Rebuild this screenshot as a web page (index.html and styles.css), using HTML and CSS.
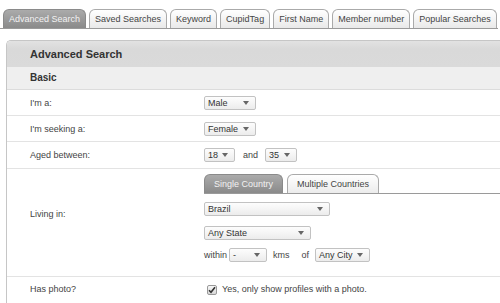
FILE: index.html
```html
<!DOCTYPE html>
<html>
<head>
<meta charset="utf-8">
<link rel="stylesheet" href="styles.css">
</head>
<body>
<div class="tabs">
  <div class="tab active">Advanced Search</div>
  <div class="tab">Saved Searches</div>
  <div class="tab">Keyword</div>
  <div class="tab">CupidTag</div>
  <div class="tab">First Name</div>
  <div class="tab">Member number</div>
  <div class="tab">Popular Searches</div>
</div>
<div class="panel">
  <div class="panel-head">Advanced Search</div>
  <div class="section">Basic</div>
  <div class="row">
    <div class="label">I'm a:</div>
    <div class="field"><span class="sel w-gender">Male</span></div>
  </div>
  <div class="row">
    <div class="label">I'm seeking a:</div>
    <div class="field"><span class="sel w-gender">Female</span></div>
  </div>
  <div class="row row-age">
    <div class="label">Aged between:</div>
    <div class="field">
      <span class="sel w-age">18</span>
      <span class="txt and">and</span>
      <span class="sel w-age2">35</span>
    </div>
  </div>
  <div class="row row-living">
    <div class="label label-top">Living in:</div>
    <div class="field field-col">
      <div class="subtabs">
        <div class="subtab active">Single Country</div>
        <div class="subtab">Multiple Countries</div>
      </div>
      <div class="line line-country"><span class="sel w-country">Brazil</span></div>
      <div class="line line-state"><span class="sel w-state">Any State</span></div>
      <div class="line line-within">
        <span class="txt">within</span>
        <span class="sel w-dist">-</span>
        <span class="txt kms">kms</span>
        <span class="txt of">of</span>
        <span class="sel w-city">Any City</span>
      </div>
    </div>
  </div>
  <div class="row row-photo">
    <div class="label">Has photo?</div>
    <div class="field">
      <span class="check"><svg width="8" height="8" viewBox="0 0 8 8"><path d="M1 4.2 L3 6.3 L7 1.2" fill="none" stroke="#333" stroke-width="1.6"/></svg></span>
      <span class="txt">Yes, only show profiles with a photo.</span>
    </div>
  </div>
</div>
</body>
</html>
```

FILE: styles.css
```css
html, body {
  margin: 0;
  padding: 0;
  background: #fff;
  overflow: hidden;
}
body {
  font-family: "Liberation Sans", Arial, sans-serif;
  font-size: 9px;
  color: #444;
}
.tabs {
  display: flex;
  gap: 3px;
  padding: 9px 0 0 3px;
  border-bottom: 1px solid #9a9a9a;
  margin-right: 2px;
}
.tab {
  box-sizing: border-box;
  height: 19px;
  line-height: 18px;
  padding: 0 5px;
  border: 1px solid #aaa;
  border-bottom: none;
  border-radius: 6px 6px 0 0;
  background: linear-gradient(#ffffff, #e9e9e9);
  color: #444;
  white-space: nowrap;
}
.tab.active {
  background: linear-gradient(#ababab, #8a8a8a);
  border-color: #8a8a8a;
  color: #f2f2f2;
}
.panel {
  margin: 11px -20px 0 6px;
  border-top: 1px solid #c6c6c6;
  border-left: 1px solid #c6c6c6;
  border-top-left-radius: 5px;
  overflow: hidden;
}
.panel-head {
  height: 26px;
  line-height: 26px;
  padding-left: 23px;
  background: linear-gradient(#e2e2e2, #d9d9d9 30%, #dadada);
  font-weight: bold;
  font-size: 11px;
  color: #333;
}
.section {
  height: 22px;
  line-height: 22px;
  padding-left: 23px;
  background: #efefef;
  border-bottom: 1px solid #dcdcdc;
  font-weight: bold;
  font-size: 10px;
  color: #333;
}
.row {
  display: flex;
  align-items: center;
  padding: 6px 0 5px;
  border-bottom: 1px solid #e3e3e3;
}
.row-age {
  padding: 6px 0 6px;
}
.row-living {
  align-items: flex-start;
  padding: 5px 0 14px;
}
.row-photo {
  padding: 7px 0 8px;
  border-bottom: none;
}
.label {
  box-sizing: border-box;
  width: 197px;
  flex: none;
  padding-left: 23px;
  line-height: 11px;
}
.label-top {
  padding-top: 35px;
}
.field {
  display: flex;
  align-items: center;
  flex: 1;
}
.field-col {
  flex-direction: column;
  align-items: stretch;
}
.txt {
  line-height: 11px;
  white-space: nowrap;
}
.sel {
  box-sizing: border-box;
  display: inline-flex;
  align-items: center;
  justify-content: space-between;
  height: 14px;
  padding: 0 6px 0 3px;
  border: 1px solid #c2c2c2;
  border-radius: 2px;
  background: linear-gradient(#fdfdfd, #ececec);
  color: #333;
  font-size: 9px;
  white-space: nowrap;
}
.sel::after {
  content: "";
  width: 0;
  height: 0;
  border-left: 3px solid transparent;
  border-right: 3px solid transparent;
  border-top: 4px solid #666;
}
.w-gender { width: 52px; }
.w-age { width: 31px; }
.w-age2 { width: 32px; }
.w-country { width: 126px; }
.w-state { width: 107px; }
.w-dist { width: 38px; margin-left: 2px; }
.w-city { width: 55px; }
.and { margin: 0 7px 0 8px; }
.kms { margin-left: 6px; }
.of { margin-left: 12px; margin-right: 6px; }
.subtabs {
  display: flex;
  gap: 4px;
  border-bottom: 1px solid #9a9a9a;
}
.subtab {
  box-sizing: border-box;
  height: 19px;
  line-height: 18px;
  padding: 0 9px;
  border: 1px solid #aaa;
  border-bottom: none;
  border-radius: 6px 6px 0 0;
  background: linear-gradient(#ffffff, #ececec);
  color: #444;
  white-space: nowrap;
}
.subtab.active {
  background: linear-gradient(#ababab, #8a8a8a);
  border-color: #8a8a8a;
  color: #f2f2f2;
}
.line {
  display: flex;
  align-items: center;
}
.line-country { margin-top: 8px; }
.line-state { margin-top: 10px; }
.line-within { margin-top: 8px; }
.check {
  box-sizing: border-box;
  display: inline-flex;
  align-items: center;
  justify-content: center;
  width: 10px;
  height: 10px;
  margin: 0 5px 0 3px;
  border: 1px solid #999;
  border-radius: 2px;
  background: linear-gradient(#f8f8f8, #d8d8d8);
}
```
